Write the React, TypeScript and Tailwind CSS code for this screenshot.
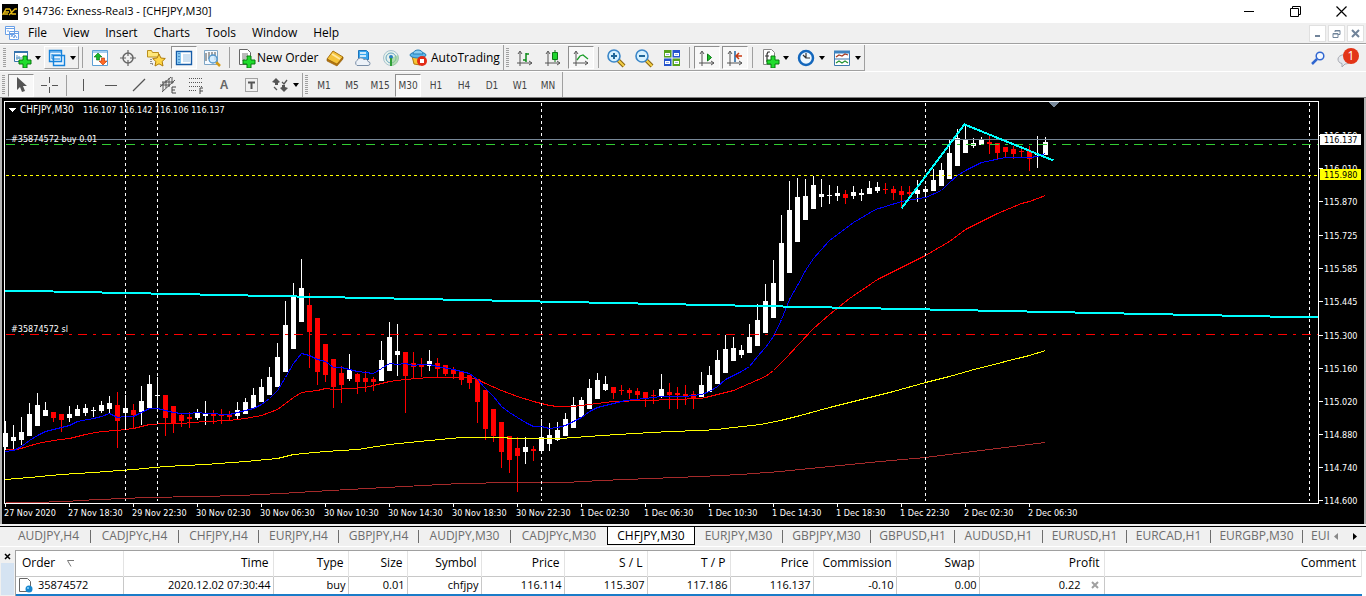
import type { ReactNode } from "react";

// [high, body top, body bottom, low, falling]
type Candle = [number, number, number, number, number?];

const candles: Candle[] = [
    [421, 433, 447, 450], [425, 437, 441, 449], [417, 432, 440, 445], [403, 414, 436, 436], [393, 405, 426, 426],
    [402, 410, 416, 416], [412, 412, 418, 422, 1], [414, 414, 420, 432, 1], [406, 414, 418, 422], [405, 409, 416, 416],
    [404, 408, 413, 416], [407, 410, 411, 417], [401, 405, 411, 413], [396, 403, 409, 413], [392, 405, 421, 448, 1],
    [395, 408, 413, 429], [404, 410, 415, 429, 1], [386, 401, 412, 425], [375, 384, 408, 408], [377, 395, 396, 408],
    [395, 395, 418, 436, 1], [406, 406, 424, 433, 1], [413, 415, 421, 427, 1], [412, 417, 419, 428, 1], [409, 413, 418, 420],
    [401, 414, 416, 425], [410, 414, 416, 424, 1], [409, 414, 416, 424, 1], [411, 415, 417, 420, 1], [402, 410, 416, 419],
    [398, 402, 414, 414], [388, 395, 408, 408], [379, 387, 402, 402], [367, 377, 395, 395], [343, 357, 387, 387],
    [301, 325, 372, 372], [283, 295, 349, 349], [259, 288, 322, 322], [293, 305, 332, 368, 1], [318, 318, 372, 385, 1],
    [344, 344, 375, 382, 1], [359, 359, 387, 408, 1], [366, 373, 385, 403, 1], [354, 370, 379, 381], [373, 374, 382, 394, 1],
    [371, 378, 382, 392, 1], [377, 379, 382, 391, 1], [341, 360, 381, 381], [322, 337, 371, 371], [324, 351, 355, 376],
    [352, 352, 376, 413, 1], [352, 363, 367, 379, 1], [358, 364, 367, 377, 1], [350, 361, 366, 371], [358, 363, 369, 377, 1],
    [365, 365, 374, 376, 1], [367, 369, 374, 379, 1], [371, 371, 380, 385, 1], [375, 375, 383, 389, 1], [379, 379, 402, 423, 1],
    [390, 390, 429, 440, 1], [409, 409, 436, 442, 1], [422, 422, 452, 468, 1], [436, 436, 460, 473, 1], [437, 448, 456, 492, 1],
    [437, 447, 452, 464], [446, 449, 451, 461, 1], [419, 437, 451, 451], [423, 435, 444, 451], [422, 430, 440, 441],
    [413, 419, 436, 436], [397, 405, 428, 428], [397, 400, 417, 417], [379, 388, 409, 409], [373, 380, 399, 399],
    [376, 384, 390, 391], [387, 387, 393, 399, 1], [385, 390, 391, 395, 1], [388, 390, 393, 399, 1], [388, 391, 395, 399, 1],
    [392, 392, 398, 407, 1], [390, 395, 396, 404, 1], [374, 389, 396, 398], [383, 392, 395, 409, 1], [387, 393, 395, 409, 1],
    [385, 394, 396, 405, 1], [391, 394, 399, 409, 1], [372, 385, 397, 397], [366, 375, 392, 392], [350, 360, 384, 384],
    [335, 349, 373, 373], [337, 348, 361, 361], [345, 350, 355, 358], [324, 337, 353, 353], [304, 320, 346, 346],
    [284, 301, 333, 333], [260, 283, 318, 318], [215, 243, 301, 301], [181, 210, 273, 273], [178, 197, 242, 242],
    [179, 196, 220, 220], [176, 185, 209, 209], [179, 194, 197, 207], [185, 195, 196, 204], [186, 193, 196, 201],
    [190, 194, 198, 204, 1], [186, 192, 196, 199], [189, 193, 195, 201], [181, 188, 194, 194], [182, 187, 191, 193],
    [183, 189, 190, 194, 1], [186, 189, 193, 200, 1], [186, 191, 195, 207, 1], [186, 192, 194, 198, 1], [180, 190, 194, 202],
    [186, 189, 192, 198], [169, 180, 191, 191], [163, 170, 186, 186], [140, 153, 179, 179], [129, 138, 166, 166],
    [124, 139, 153, 153], [138, 143, 146, 148], [137, 140, 145, 145], [135, 142, 144, 154, 1], [143, 143, 153, 159, 1],
    [147, 147, 152, 157, 1], [146, 149, 154, 159, 1], [149, 151, 152, 157, 1], [146, 151, 159, 171, 1], [136, 154, 155, 168],
    [137, 142, 155, 155],
];

const averages = [
    {
        color: "#a52a2a",
        points: "5,502 33,502 65,501 97,499 125,498 145,497 200,496 240,495 280,493 330,490 385,487 460,483 512,482 565,482 600,480 650,478 700,476 740,474 780,471 850,464 880,461 925,457 965,452 1005,447 1045,442",
    },
    {
        color: "#ffff00",
        points: "5,479 29,477 61,474 93,472 133,469 165,466 205,464 245,461 277,458 293,454 325,451 357,449 389,444 429,440 461,437 505,437 509,438 560,438 573,437 617,434 669,431 701,430 717,429 733,427 760,424 780,420 800,415 829,407 861,399 893,391 925,382 949,376 970,370 1005,361 1029,355 1045,350",
    },
    {
        color: "#ff0000",
        points: "5,449 17,449 37,443 53,440 69,438 85,434 101,431 117,430 133,428 149,424 165,423 181,423 205,421 229,420 245,418 261,415 277,409 285,403 293,397 301,392 317,390 325,388 333,389 349,388 365,387 381,383 389,381 405,379 429,377 469,377 477,379 485,383 501,390 517,396 533,401 549,405 557,406 573,406 589,404 613,401 645,400 701,398 717,394 733,390 749,383 765,376 773,370 785,358 813,328 829,314 849,298 877,279 901,267 925,255 949,241 965,229 981,221 997,213 1021,203 1029,201 1045,195",
    },
    {
        color: "#0000ff",
        points: "5,451 13,450 21,446 29,440 37,435 45,431 61,427 69,425 77,421 93,418 101,416 109,413 117,417 125,416 133,416 141,412 149,408 157,408 165,410 173,412 181,413 189,413 197,412 205,413 229,414 237,412 253,408 261,404 269,398 277,390 285,377 293,363 301,353 309,355 317,359 325,361 333,367 341,367 357,371 373,373 389,363 397,364 405,363 413,365 421,364 429,364 437,366 453,369 469,373 477,379 485,388 493,396 501,406 509,412 517,417 525,422 533,426 541,426 549,428 557,427 565,425 573,421 581,417 589,411 597,407 605,405 613,403 625,400 645,398 661,396 685,396 701,394 709,391 717,386 725,379 741,371 749,366 757,356 765,347 773,336 781,319 789,299 797,285 805,270 813,258 829,240 853,222 875,209 885,206 901,201 925,197 941,190 949,182 957,175 965,170 981,162 1005,157 1029,157 1037,156 1045,153",
    },
];

const prices: [string, number][] = [
    ["116.150", 135], ["116.010", 168], ["115.870", 201], ["115.725", 235], ["115.585", 268], ["115.445", 301],
    ["115.300", 335], ["115.160", 368], ["115.020", 401], ["114.880", 434], ["114.740", 467], ["114.600", 500],
];

const dates = [
    "27 Nov 2020", "27 Nov 18:30", "29 Nov 22:30", "30 Nov 02:30", "30 Nov 06:30", "30 Nov 10:30", "30 Nov 14:30",
    "30 Nov 18:30", "30 Nov 22:30", "1 Dec 02:30", "1 Dec 06:30", "1 Dec 10:30", "1 Dec 14:30", "1 Dec 18:30",
    "1 Dec 22:30", "2 Dec 02:30", "2 Dec 06:30",
];

const tabs: [string, string][] = [
    ["AUDJPY,H4", "w-[84px]"], ["CADJPYc,H4", "w-[88px]"], ["CHFJPY,H4", "w-20"], ["EURJPY,H4", "w-20"],
    ["GBPJPY,H4", "w-20"], ["AUDJPY,M30", "w-[92px]"], ["CADJPYc,M30", "w-24"], ["CHFJPY,M30", "w-[88px]"],
    ["EURJPY,M30", "w-[88px]"], ["GBPJPY,M30", "w-[88px]"], ["GBPUSD,H1", "w-[84px]"], ["AUDUSD,H1", "w-[88px]"],
    ["EURUSD,H1", "w-[84px]"], ["EURCAD,H1", "w-[84px]"], ["EURGBP,M30", "w-[92px]"],
];

const columns: [string, string, string][] = [
    ["Time", "2020.12.02 07:30:44", "w-[150px]"], ["Type", "buy", "w-[75px]"], ["Size", "0.01", "w-[59px]"],
    ["Symbol", "chfjpy", "w-[74px]"], ["Price", "116.114", "w-[83px]"], ["S / L", "115.307", "w-[83px]"],
    ["T / P", "117.186", "w-[83px]"], ["Price", "116.137", "w-[83px]"], ["Commission", "-0.10", "w-[83px]"],
    ["Swap", "0.00", "w-[83px]"],
];

function Icon({ children, size = 20 }: { children: ReactNode; size?: number }) {
    return <svg width={size} height={size} viewBox="0 0 20 20" fill="none" className="shrink-0">{children}</svg>;
}

function Caret() {
    return <svg width="6" height="4" viewBox="0 0 6 4" className="shrink-0"><path d="M0 0h6L3 4z" fill="#000" /></svg>;
}

function Plus() {
    return <path d="M11 8h4v4h4v4h-4v4h-4v-4H7v-4h4z" fill="#1fdc2c" stroke="#087a0e" />;
}

function Grip() {
    return <span className="mx-[2px] h-5 w-[3px] shrink-0 bg-[repeating-linear-gradient(#a0a0a0_0_1px,#f0f0f0_1px_2px)]" />;
}

function Separator() {
    return <span className="mx-[3px] h-[21px] w-px shrink-0 bg-[#a0a0a0]" />;
}

function Tool({ label, pressed, wide, children }: { label: string; pressed?: boolean; wide?: boolean; children: ReactNode }) {
    return (
        <button aria-label={label} title={label} className={`flex h-full shrink-0 items-center justify-center gap-[3px] ${wide ? "w-9" : "w-7"}`}>
            {pressed ? (
                <span className="flex h-[23px] w-[26px] items-center justify-center border border-t-[#8f8f8f] border-l-[#8f8f8f] border-r-white border-b-white bg-[#f8f8f8]">{children}</span>
            ) : children}
        </button>
    );
}

function Axes() {
    return <path d="M5 4v14M2 15h15M3 6l2-3 2 3M14 13l3 2-3 2" stroke="#555" />;
}

function Magnifier({ plus }: { plus?: boolean }) {
    return (
        <Icon>
            <path d="M12 12l6 6" stroke="#8a6410" strokeWidth="4" />
            <path d="M12 12l6 6" stroke="#f3cf45" strokeWidth="2" />
            <circle cx="8" cy="8" r="6" fill="#d6f1ff" stroke="#3a86c8" strokeWidth="1.6" />
            <path d={plus ? "M5 8h6M8 5v6" : "M5 8h6"} stroke="#1f6699" strokeWidth="2" />
        </Icon>
    );
}

function TitleBar() {
    return (
        <header className="flex h-[23px] items-center bg-white pl-[2px]">
            <svg width="16" height="16" viewBox="0 0 16 16">
                <path fill="#000" d="M0 0h16v16H0z" />
                <path d="M8 5H4L1 10h5M2 8h5M8 5l2 5h4M15 5h-2l-6 6" fill="none" stroke="#e9bd16" strokeWidth="1.300" />
            </svg>
            <h1 className="ml-[5px] text-[11px]">914736: Exness-Real3 - [CHFJPY,M30]</h1>
            <div className="ml-auto flex pr-[2px]">
                <button aria-label="Minimize" className="flex w-[46px] justify-center"><svg width="11" height="11"><path d="M0 5.500h10" stroke="#000" /></svg></button>
                <button aria-label="Restore" className="flex w-[46px] justify-center"><svg width="11" height="11" fill="none" stroke="#000"><path d="M.5 2.500h8v8h-8zM2.500 2.500v-2h8v8h-2" /></svg></button>
                <button aria-label="Close" className="flex w-[46px] justify-center"><svg width="11" height="11"><path d="M.5 .5l10 10M10.500 .5l-10 10" stroke="#000" strokeWidth="1.200" /></svg></button>
            </div>
        </header>
    );
}

function MenuBar() {
    return (
        <nav className="flex h-[21px] items-center border-b border-[#a0a0a0] pl-[5px]">
            <svg width="14" height="14" viewBox="0 0 14 14" fill="#fff" stroke="#6aa0e6">
                <path d="M.5 .5h9v8h-9zM4.500 5.500h9v8h-9zM.5 2.500h9M4.500 7.500h9" />
                <path d="M6 11l1-2 2 3 1-3 2 3M2 5h2" fill="none" />
            </svg>
            <div className="ml-px flex">
                {["File", "View", "Insert", "Charts", "Tools", "Window", "Help"].map((item) => (
                    <button key={item} className="px-2 text-xs leading-5">{item}</button>
                ))}
            </div>
            <div className="ml-auto flex gap-[2px] pr-[2px]">
                <button aria-label="Minimize chart" className="flex size-[17px] items-center justify-center border border-[#e0e0e0] bg-white"><svg width="9" height="9"><path d="M2 7h5" stroke="#71849a" strokeWidth="2" /></svg></button>
                <button aria-label="Restore chart" className="flex size-[17px] items-center justify-center border border-[#e0e0e0] bg-white"><svg width="9" height="9" fill="none" stroke="#71849a"><path d="M1 4.500h5v4H1zM1 5h5M3 3V1.500h5v4H6M3 2h5" /></svg></button>
                <button aria-label="Close chart" className="flex size-[17px] items-center justify-center border border-[#e0e0e0] bg-white"><svg width="9" height="9"><path d="M1 1l7 7M8 1L1 8" stroke="#71849a" strokeWidth="2" /></svg></button>
            </div>
        </nav>
    );
}

function MainToolbar() {
    return (
        <div className="flex h-[27px] items-center justify-between border-t border-white">
            <div className="flex h-full items-center border-r border-b border-[#a0a0a0] pl-px">
                <Grip />
                <Tool label="New chart" wide>
                    <Icon>
                        <path d="M2.500 3.500h13v10h-13z" fill="#fff" stroke="#3574ad" />
                        <path d="M2 4h14" stroke="#3574ad" strokeWidth="2" />
                        <path d="M5 7v5M4 10h6M7 8v3" stroke="#5594c4" />
                        <Plus />
                    </Icon>
                    <Caret />
                </Tool>
                <button aria-label="Profiles" className="flex h-[23px] w-[35px] items-center justify-center gap-[3px] border border-t-white border-l-white border-r-[#a0a0a0] border-b-[#a0a0a0]">
                    <Icon>
                        <path d="M6.500 7.500h11v10h-11zM2.500 2.500h12v11h-12z" fill="#eaf5ff" stroke="#1683dc" strokeWidth="1.400" />
                        <path d="M2 4h13M5 6v5M5 7h8M5 11h8" stroke="#1683dc" />
                    </Icon>
                    <Caret />
                </button>
                <Separator />
                <Tool label="Market Watch">
                    <Icon>
                        <path d="M2.500 2.500h15v15h-15z" fill="#fff" stroke="#5b9fd6" />
                        <path d="M3 4h14" stroke="#a8d0ef" strokeWidth="2" />
                        <path d="M8 5l4 4H9.500v3h-3V9H4z" fill="#19b92b" stroke="#08700f" strokeWidth=".6" />
                        <path d="M13 17l-4-4h2.500v-3h3v3H17z" fill="#ff6a24" stroke="#b52b00" strokeWidth=".6" />
                    </Icon>
                </Tool>
                <Tool label="Data Window">
                    <Icon>
                        <circle cx="10" cy="10" r="5" stroke="#666" strokeWidth="1.500" />
                        <path d="M10 2v6M10 12v6M2 10h6M12 10h6" stroke="#666" strokeWidth="1.200" />
                    </Icon>
                </Tool>
                <Tool label="Navigator">
                    <Icon>
                        <path d="M1.500 9V2.500h4l1 2h6V9z" fill="#ffe779" stroke="#bb8f1c" />
                        <path d="M5 11v5h3" stroke="#333" strokeDasharray="1 1" />
                        <path d="M13 6l1.900 4 4.400.5-3.200 3 .9 4.500-4-2.200L9 18l.9-4.500-3.200-3 4.400-.5z" fill="#ffd747" stroke="#b07d0a" />
                    </Icon>
                </Tool>
                <Tool label="Terminal" pressed>
                    <Icon>
                        <path d="M2.500 3.500h15v13h-15z" fill="#fff" stroke="#165ca8" strokeWidth="1.400" />
                        <path d="M3 4h4v12H3z" fill="#83c5f0" />
                        <path d="M5 5v11" stroke="#165ca8" strokeDasharray="1 2" />
                        <path d="M9 7h7M9 9h7M9 11h7M9 13h7" stroke="#9cc2e4" />
                    </Icon>
                </Tool>
                <Tool label="Strategy Tester">
                    <Icon>
                        <path d="M2.500 2.500h13v14h-13z" fill="#f6faff" stroke="#7fa6c6" />
                        <path d="M4 5v8M7 4v7M10 4v4M13 4v8" stroke="#888" strokeWidth="1.500" />
                        <path d="M14 14l4 4" stroke="#d49b17" strokeWidth="2.500" />
                        <circle cx="11" cy="11" r="4" fill="#cdeaff" fillOpacity=".8" stroke="#5296cc" strokeWidth="1.300" />
                    </Icon>
                </Tool>
                <Separator />
                <button className="flex h-full w-[88px] items-center gap-px pl-[3px] text-xs whitespace-nowrap">
                    <Icon>
                        <path d="M3.500 1.500h8l3 3v12h-11z" fill="#fff" stroke="#666" />
                        <path d="M6 6h6M6 8h6M6 10h4M6 12h3" stroke="#777" />
                        <Plus />
                    </Icon>
                    New Order
                </button>
                <Tool label="MetaEditor">
                    <Icon>
                        <path d="M2 11l6-8 10 6-6 8z" fill="#f5c33a" stroke="#a97311" />
                        <path d="M2 11v2l10 5 6-7V9l-6 7z" fill="#b9770d" stroke="#8c5a0b" strokeWidth=".6" />
                        <path d="M7 6l8 5" stroke="#ffe9a0" strokeWidth="2" />
                    </Icon>
                </Tool>
                <Tool label="VPS">
                    <Icon>
                        <path d="M5.500 2.500h8l2 2v7h-10z" fill="#39a6ef" stroke="#1c74bb" />
                        <path d="M7 5h6M7 8h6" stroke="#fff" strokeWidth="1.500" />
                        <path d="M4 17.500a3 3 0 010-5 4 4 0 017-1 3 3 0 014 2 2 2 0 010 4z" fill="#edf2f8" stroke="#7a8fa8" />
                    </Icon>
                </Tool>
                <Tool label="Signals">
                    <Icon>
                        <circle cx="10" cy="10" r="7.500" fill="#e7f2ec" stroke="#a9c4cf" />
                        <circle cx="10" cy="10" r="5" stroke="#69a5c0" />
                        <path d="M10 10v8a8 8 0 007-11" fill="#91cf8b" fillOpacity=".6" />
                        <circle cx="10" cy="9" r="2" fill="#2b7cc0" />
                        <path d="M10 10v8" stroke="#2f9f37" strokeWidth="2" />
                    </Icon>
                </Tool>
                <button className="flex h-full w-[98px] items-center gap-[3px] pl-[3px] text-xs">
                    <Icon>
                        <path d="M4 8h13l-5 9-6-1z" fill="#f6c431" stroke="#b0780c" />
                        <ellipse cx="10" cy="7" rx="8" ry="3" fill="#5cb7ea" stroke="#267eb5" />
                        <path d="M5 6a5 4 0 0110 0z" fill="#8bd0f4" stroke="#267eb5" />
                        <circle cx="14" cy="13" r="5" fill="#e22b17" />
                        <path d="M12 11h4v4h-4z" fill="#fff" />
                    </Icon>
                    AutoTrading
                </button>
                <span className="h-full w-px bg-[#a0a0a0]" />
                <Grip />
                <Tool label="Bar chart"><Icon><Axes /><path d="M11 5v9M11 6h3M8 12h3" stroke="#0b8a18" strokeWidth="1.500" /></Icon></Tool>
                <Tool label="Candlesticks"><Icon><Axes /><path d="M12 2v12" stroke="#0b7814" /><path d="M9.500 4.500h5v7h-5z" fill="#1fd52e" stroke="#0b7814" /></Icon></Tool>
                <Tool label="Line chart" pressed><Icon><Axes /><path d="M6 12l3-4 3-1 5 4" stroke="#1a9d28" strokeWidth="1.300" /></Icon></Tool>
                <Separator />
                <Tool label="Zoom in"><Magnifier plus /></Tool>
                <Tool label="Zoom out"><Magnifier /></Tool>
                <Tool label="Tile windows">
                    <Icon>
                        <path d="M2 2h8v8H2zM10 10h8v8h-8z" fill="#55a31c" />
                        <path d="M10 2h8v8h-8zM2 10h8v8H2z" fill="#2554cc" />
                        <path d="M3 5h5v3H3zM12 5h5v3h-5zM3 13h5v3H3zM12 13h5v3h-5z" fill="#fff" />
                        <path d="M4 6.500h3M13 6.500h3M4 14.500h3M13 14.500h3" stroke="#9ab4d8" />
                        <path d="M2 10h16M10 2v16" stroke="#e8f1fa" />
                    </Icon>
                </Tool>
                <Separator />
                <Tool label="Auto scroll" pressed><Icon><Axes /><path d="M10.500 6v7l4-3.500z" fill="#1cc42b" stroke="#0b7814" /></Icon></Tool>
                <Tool label="Chart shift" pressed><Icon><Axes /><path d="M10 3v11" stroke="#1c62a2" strokeWidth="1.500" /><path d="M17 8h-5M14 5l-3 3 3 3" stroke="#c73810" strokeWidth="1.500" /></Icon></Tool>
                <Separator />
                <Tool label="Indicators" wide>
                    <Icon>
                        <path d="M3.500 1.500h8l3 3v12h-11z" fill="#fff" stroke="#888" />
                        <path d="M10 4H8L7 6v8M5 8h4" stroke="#333" strokeWidth="1.200" />
                        <Plus />
                    </Icon>
                    <Caret />
                </Tool>
                <Tool label="Periods" wide>
                    <Icon>
                        <circle cx="10" cy="10" r="7" fill="#eff8ff" stroke="#1467bc" strokeWidth="2.500" />
                        <path d="M10 5v5h4M7 7l3 3" stroke="#333" strokeWidth="1.200" />
                    </Icon>
                    <Caret />
                </Tool>
                <Tool label="Templates" wide>
                    <Icon>
                        <path d="M2.500 3.500h15v14h-15z" fill="#fff" stroke="#3d78ae" />
                        <path d="M2 4h16" stroke="#3d83c0" strokeWidth="3" />
                        <path d="M2 11h16" stroke="#3d78ae" />
                        <path d="M4 9l3-2 3 1 3-2 3 1" stroke="#a53a20" strokeWidth="1.300" />
                        <path d="M4 15l3-2 3 2 3-2 3 2" stroke="#269334" strokeWidth="1.300" />
                    </Icon>
                    <Caret />
                </Tool>
            </div>
            <div className="flex items-center gap-3 pr-[7px]">
                <button aria-label="Search">
                    <svg width="14" height="14" viewBox="0 0 14 14" fill="none"><circle cx="9" cy="5" r="3.800" fill="#f3f8ff" stroke="#3066d0" strokeWidth="1.500" /><path d="M6 8l-5 5" stroke="#3066d0" strokeWidth="2.500" /></svg>
                </button>
                <button aria-label="Notifications" className="relative flex h-5 w-[22px] items-end">
                    <svg width="16" height="14" viewBox="0 0 16 14"><path d="M1 5a6 4 0 0113 0c0 4-4 5-6 5l-3 3V9.500C2 9 1 7 1 5z" fill="#e4e6ec" stroke="#a6a9b0" /></svg>
                    <span className="absolute top-0 right-0 size-4 rounded-full bg-[#e33417] text-center text-xs leading-4 text-white">1</span>
                </button>
            </div>
        </div>
    );
}

function DrawingToolbar() {
    return (
        <div className="flex h-[26px] items-center border-t border-white">
            <div className="flex h-full items-center border-r border-[#a0a0a0] pt-px font-['DejaVu_Sans_Condensed','DejaVu_Sans',sans-serif] text-[10px] text-[#444]">
                <Grip />
                <Tool label="Cursor" pressed><Icon><path d="M6 2v13l3-3 2 5 3-1-2-5h4z" fill="#555" /></Icon></Tool>
                <Tool label="Crosshair"><Icon><path d="M10.500 2v6M10.500 12v6M2 10.500h6M13 10.500h6" stroke="#555" /></Icon></Tool>
                <Separator />
                <Tool label="Vertical line"><Icon><path d="M9.500 4v12" stroke="#555" /></Icon></Tool>
                <Tool label="Horizontal line"><Icon><path d="M3 10.500h12" stroke="#555" /></Icon></Tool>
                <Tool label="Trendline"><Icon><path d="M3 16L15 4" stroke="#555" strokeWidth="1.200" /></Icon></Tool>
                <Tool label="Equidistant channel">
                    <Icon>
                        <path d="M2 12L13 2M4 17L17 5M5 7v9M8 5v8M11 3v9M14 2v7M2 10h10M4 7h12" stroke="#555" />
                        <path d="M18 12h-4v6h4M14 15h3" stroke="#444" />
                    </Icon>
                </Tool>
                <Tool label="Fibonacci retracement">
                    <Icon>
                        <path d="M3 3.500h14M3 7.500h14M3 11.500h14M3 15.500h8" stroke="#555" strokeDasharray="1 1" />
                        <path d="M17 13h-3v6M14 16h3" stroke="#444" />
                    </Icon>
                </Tool>
                <Tool label="Text"><span className="font-['Liberation_Sans',sans-serif] text-xs font-bold text-[#666]">A</span></Tool>
                <Tool label="Text label">
                    <Icon>
                        <path d="M3.500 3.500h12v13h-12z" stroke="#555" strokeDasharray="1 1" />
                        <path d="M6 7.500h7M9.500 7v7" stroke="#555" strokeWidth="2" />
                    </Icon>
                </Tool>
                <Tool label="Arrows" wide>
                    <Icon>
                        <path d="M6 3l4 4-2 1v2H5V8L2 7zM14 17l-4-4 2-1v-2h3v2l3 1z" fill="#555" />
                        <path d="M4 12l3 3M12 7l2 2 3-4" stroke="#555" strokeWidth="1.300" />
                    </Icon>
                    <Caret />
                </Tool>
                <span className="h-full w-px bg-[#a0a0a0]" />
                <Grip />
                {["M1", "M5", "M15", "M30", "H1", "H4", "D1", "W1", "MN"].map((period) => (
                    <Tool key={period} label={period} pressed={period === "M30"}>{period}</Tool>
                ))}
            </div>
        </div>
    );
}

function Chart() {
    return (
        <main className="border-t border-[#808080] bg-black">
            <svg viewBox="0 98 1366 426" className="block h-auto w-full bg-black font-['DejaVu_Sans_Condensed','DejaVu_Sans',sans-serif] text-[9px]" role="img" aria-label="CHFJPY,M30 chart">
                <path d="M0 98h2v426H0zM1364 98h2v426h-2z" fill="#b4b4b4" />
                <g shapeRendering="crispEdges">
                    {candles.map(([high, top, bottom, low, falling], i) => (
                        <g key={i} fill={falling ? "#ff0000" : "#ffffff"}>
                            <rect x={5 + 8 * i} y={high} width="1" height={low - high} />
                            <rect x={3 + 8 * i} y={top} width="5" height={bottom - top} />
                        </g>
                    ))}
                    <g transform="translate(.5 .5)" fill="none" stroke="#fff">
                        {averages.map(({ color, points }) => <polyline key={color} points={points} stroke={color} />)}
                        {[125, 157, 541, 925, 1309].map((x) => <path key={x} d={`M${x} 102V500`} strokeDasharray="3 3" />)}
                        <path d="M5 139H1318" stroke="#778899" />
                        <path d="M5 144H1318" stroke="#32cd32" strokeDasharray="9 6 3 6" />
                        <path d="M5 175H1318" stroke="#ffff00" strokeDasharray="3 3" />
                        <path d="M5 334H1318" stroke="#ff0000" strokeDasharray="9 6 3 6" />
                        <path d="M4 290L1318 317M901 208L964 124L1053 160" stroke="#00ffff" strokeWidth="2" />
                        <path d="M4 101H1318V503H4z" />
                        {prices.map(([price, y]) => <path key={price} d={`M1318 ${y}h4`} />)}
                        {dates.map((date, i) => <path key={date} d={`M${5 + 64 * i} 503v3`} />)}
                    </g>
                    <path d="M1048 102h11l-5 5z" fill="#778899" />
                    <path d="M8 108h8l-4 4z" fill="#fff" />
                </g>
                <g fill="#fff">
                    <text x="20" y="113" className="text-[10px]">CHFJPY,M30</text>
                    <text x="83" y="113">116.107 116.142 116.106 116.137</text>
                    <text x="11" y="142">#35874572 buy 0.01</text>
                    <text x="11" y="332">#35874572 sl</text>
                    {prices.map(([price, y]) => <text key={price} x="1324" y={y + 4}>{price}</text>)}
                    {dates.map((date, i) => <text key={date} x={4 + 64 * i} y="516">{date}</text>)}
                </g>
                <path d="M1320 134h41v11h-41z" fill="#fff" />
                <path d="M1320 169h41v11h-41z" fill="#ff0" />
                <text x="1324" y="143">116.137</text>
                <text x="1324" y="178">115.980</text>
            </svg>
        </main>
    );
}

function ChartTabs() {
    return (
        <div className="border-t-2 border-[#f0f0f0]">
            <div className="flex h-5 items-start border-t border-black pl-[7px] text-xs text-[#6d6d6d]">
                <div className="flex h-full min-w-0 flex-1 items-start overflow-hidden" role="tablist">
                    {tabs.map(([name, width]) => name === "CHFJPY,M30" ? (
                        <button key={name} role="tab" aria-selected="true" className={`${width} h-[18px] shrink-0 border border-t-0 border-black bg-white leading-[17px] text-black`}>{name}</button>
                    ) : (
                        <button key={name} role="tab" aria-selected="false" className={`${width} flex h-[18px] shrink-0 items-center justify-center`}>
                            <span className="flex-1">{name}</span>
                            {name !== "CADJPYc,M30" && <span className="h-[13px] w-px bg-[#6d6d6d]" />}
                        </button>
                    ))}
                    <button role="tab" aria-selected="false" className="h-[18px] flex-1 overflow-hidden pl-2 text-left">EUI</button>
                </div>
                <div className="flex h-[18px] w-9 items-center justify-between pr-[9px] pl-1">
                    <button aria-label="Scroll tabs left"><svg width="4" height="7"><path d="M4 0v7L0 3.500z" fill="#888" /></svg></button>
                    <button aria-label="Scroll tabs right"><svg width="4" height="7"><path d="M0 0v7l4-3.500z" fill="#000" /></svg></button>
                </div>
            </div>
            <div className="h-1 border-t border-white" />
        </div>
    );
}

function Terminal() {
    return (
        <section className="flex">
            <div className="w-[15px] shrink-0">
                <button aria-label="Close terminal" className="flex h-[13px] w-full items-center justify-center"><svg width="7" height="7"><path d="M1 1l5 5M6 1L1 6" stroke="#000" strokeWidth="1.500" /></svg></button>
                <div className="mx-px h-8 bg-[#d5e3f2]" />
            </div>
            <div className="min-w-0 flex-1 border-t border-l border-[#a0a0a0] bg-white pr-1">
                <table className="w-full table-fixed border-collapse text-right text-xs whitespace-nowrap">
                    <thead>
                        <tr className="h-[25px] border-b border-[#c8c8c8]">
                            <th className="w-[107px] border-r border-[#e3e3e3] pl-[6px] text-left font-normal">
                                <button className="flex items-center gap-3">Order <svg width="7" height="7" fill="none" stroke="#777"><path d="M7 .5H.5L4 6.500" /></svg></button>
                            </th>
                            {columns.map(([name, , width], i) => <th key={i} className={`${width} border-r border-[#e3e3e3] pr-1 font-normal`}>{name}</th>)}
                            <th className="w-[125px] border-r border-[#e3e3e3] pr-1 font-normal">Profit</th>
                            <th className="border-r border-[#e3e3e3] pr-[5px] font-normal">Comment</th>
                        </tr>
                    </thead>
                    <tbody>
                        <tr className="h-[19px] border-b-2 border-[#1a7cc8] text-[11px]">
                            <td className="border-r border-r-[#c8c8c8] pl-[2px] text-left leading-4">
                                <span className="flex items-center gap-1">
                                    <svg width="16" height="16" viewBox="0 0 16 16"><path d="M1.500 1.500h8l3 3v9l-2 1h-9z" fill="#fff" stroke="#666" /><circle cx="11" cy="12" r="3.500" fill="#1687cf" /><circle cx="10" cy="11" r="1" fill="#8ed4ff" /></svg>
                                    35874572
                                </span>
                            </td>
                            {columns.map(([, value], i) => <td key={i} className="border-r border-r-[#c8c8c8] pr-[2px] leading-4">{value}</td>)}
                            <td className="border-r border-r-[#c8c8c8] pr-[5px] leading-4">
                                <span className="flex items-center justify-end gap-[10px]">
                                    0.22
                                    <button aria-label="Close order"><svg width="8" height="8"><path d="M1 1l6 6M7 1L1 7" stroke="#a0a0a0" strokeWidth="2" /></svg></button>
                                </span>
                            </td>
                            <td />
                        </tr>
                    </tbody>
                </table>
            </div>
        </section>
    );
}

export default function App() {
    return (
        <div className="w-full overflow-hidden bg-[#f0f0f0] font-['Open_Sans','Noto_Sans',sans-serif] text-black">
            <TitleBar />
            <MenuBar />
            <MainToolbar />
            <DrawingToolbar />
            <Chart />
            <ChartTabs />
            <Terminal />
        </div>
    );
}
